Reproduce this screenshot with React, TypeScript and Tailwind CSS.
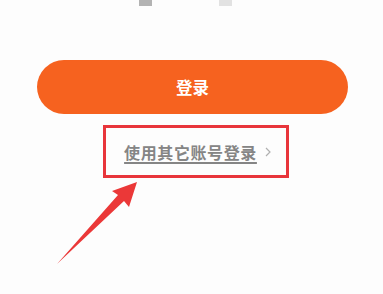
import React from "react";

export default function App() {
  return (
    <div
      className="relative w-[383px] h-[294px] bg-[#fdfdfd] overflow-hidden"
      style={{ fontFamily: '"Noto Sans CJK SC", "Noto Sans", sans-serif' }}
    >
      <div className="flex flex-col">
        <div className="flex h-[6px]">
          <div className="ml-[139px] w-[13px] h-[6px] bg-[#b3b3b3]" />
          <div className="ml-[67px] w-[13px] h-[6px] bg-[#e2e2e2]" />
        </div>
        <div className="ml-[37px] mt-[54px] w-[311px] h-[54px] rounded-full bg-[#f6621f] flex items-center justify-center">
          <span className="text-white text-[16.5px] font-bold leading-none">登录</span>
        </div>
        <div className="ml-[103px] mt-[11px] w-[186px] h-[53px] border-[3px] border-[#e8353b] flex items-center justify-center pl-[3px]">
          <span className="text-[#858585] text-[16px] font-bold leading-none underline decoration-[1.5px] underline-offset-[3px] tracking-[0.6px]">
            使用其它账号登录
          </span>
          <svg className="ml-[8px] mt-[1px]" width="6" height="10" viewBox="0 0 6 10">
            <path d="M1 1 L5 5 L1 9" fill="none" stroke="#b0b0b0" strokeWidth="1.2" />
          </svg>
        </div>
      </div>
      <svg className="absolute left-0 top-0" width="383" height="294" viewBox="0 0 383 294">
        <path d="M137 182 L129 207 L124 201 L57 264 L118 195 L112 191 Z" fill="#eb3838" />
      </svg>
    </div>
  );
}
